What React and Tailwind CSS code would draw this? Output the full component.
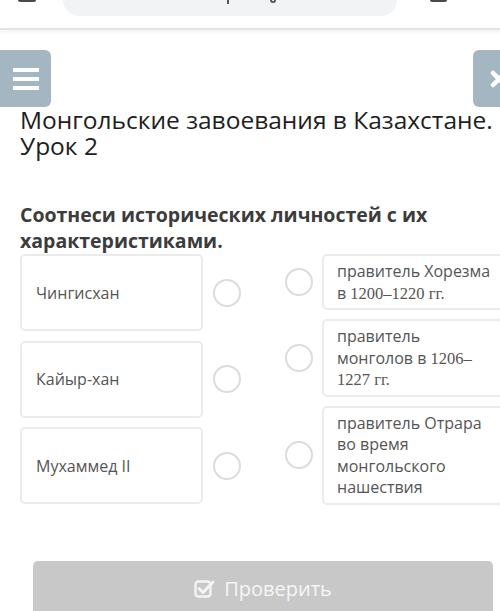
import React from "react";

const leftItems = ["Чингисхан", "Кайыр-хан", "Мухаммед II"];

const Serif = ({ children }) => (
  <span className="font-['Liberation_Serif',serif] text-[16.5px] leading-[21.5px]">{children}</span>
);

const rightItems = [
  <>
    правитель Хорезма в <Serif>1200–1220 гг.</Serif>
  </>,
  <>
    правитель монголов в <Serif>1206–</Serif> <Serif>1227 гг.</Serif>
  </>,
  <>правитель Отрара во время монгольского нашествия</>,
];

const Circle = () => (
  <div className="w-[28px] h-[28px] shrink-0 rounded-full border-2 border-[#dcdcdc] bg-white" />
);

const CheckSquare = () => (
  <svg width="22" height="20" viewBox="0 0 22 20" fill="none">
    <rect x="1.5" y="2.5" width="15" height="15" rx="3" stroke="#f4f4f4" strokeWidth="2.4" />
    <path d="M5 9.5 L9 13.5 L19 3" stroke="#f4f4f4" strokeWidth="3" strokeLinecap="round" strokeLinejoin="round" />
  </svg>
);

export default function App() {
  return (
    <div className="w-[500px] h-[611px] overflow-hidden bg-white font-['Open_Sans',sans-serif]">
      {/* browser bar, cut at the top */}
      <div className="h-[30px] border-b-2 border-[#e4e4e4] shadow-[0_2px_3px_rgba(0,0,0,0.05)] flex items-start">
        <div className="w-[18px]" />
        <div className="w-[18px] h-[2px] bg-[#4a4a4a] rounded-b-sm" />
        <div className="ml-[27px] w-[334px] h-[16px] bg-[#f1f3f4] rounded-b-[16px] flex items-start">
          <div className="ml-[164px] w-[2px] h-[4px] bg-[#555]" />
          <div className="ml-[41px] w-[6px] h-[3px] border-b-2 border-x-2 border-[#555] rounded-b-full" />
        </div>
        <div className="ml-[33px] w-[17px] h-[2px] bg-[#4a4a4a] rounded-b-sm" />
      </div>

      {/* menu / close */}
      <div className="mt-[20px] h-[57px] flex justify-between">
        <div className="w-[51px] h-full bg-[#a5b6c3] rounded-r-[6px] flex flex-col items-center justify-center gap-[5px]">
          <div className="w-[26px] h-[4px] bg-white" />
          <div className="w-[26px] h-[4px] bg-white" />
          <div className="w-[26px] h-[4px] bg-white" />
        </div>
        <div className="w-[51px] h-full mr-[-24px] bg-[#a5b6c3] rounded-l-[6px] flex items-center justify-center">
          <svg width="20" height="20" viewBox="0 0 20 20">
            <path d="M4 4 L16 16 M16 4 L4 16" stroke="white" strokeWidth="4.5" strokeLinecap="round" />
          </svg>
        </div>
      </div>

      <h1 className="pl-[20px] text-[24.5px] leading-[26px] text-[#1e1e1e] font-normal">
        Монгольские завоевания в Казахстане.
        <br />
        Урок 2
      </h1>

      <h2 className="mt-[43px] pl-[20px] pr-[10px] text-[19.5px] leading-[26px] font-bold text-[#3c3c3c]">
        Соотнеси исторических личностей с их характеристиками.
      </h2>

      {/* matching */}
      <div className="flex items-start pl-[20px]">
        <div className="flex flex-col gap-[9.5px]">
          {leftItems.map((t) => (
            <div key={t} className="flex items-center">
              <div className="w-[183px] h-[77px] border-2 border-[#ebebeb] rounded-[5px] flex items-center pl-[14px] text-[16px] text-[#555]">
                {t}
              </div>
              <div className="ml-[10px]">
                <Circle />
              </div>
            </div>
          ))}
        </div>
        <div className="ml-[44px] flex flex-col gap-[9px]">
          {rightItems.map((t, i) => (
            <div key={i} className="flex items-center">
              <Circle />
              <div className="ml-[9px] w-[186px] shrink-0 border-2 border-[#ebebeb] rounded-[5px] px-[13px] pt-[5px] pb-[4px] text-[16px] leading-[21.5px] text-[#555]">
                {t}
              </div>
            </div>
          ))}
        </div>
      </div>

      <div className="mt-[56px] mx-[33px] w-[460px] h-[56px] bg-[#c8c8c8] rounded-t-[5px] flex items-center justify-center gap-[8px] text-[20px] text-[#f6f6f6]">
        <CheckSquare />
        <span>Проверить</span>
      </div>
    </div>
  );
}
